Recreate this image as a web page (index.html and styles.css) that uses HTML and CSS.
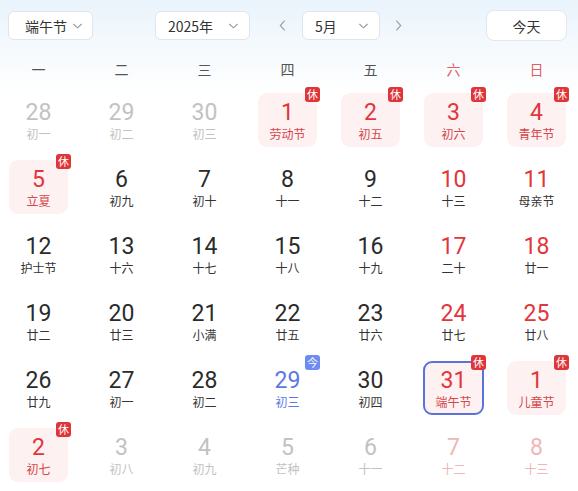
FILE: index.html
```html
<!DOCTYPE html>
<html lang="zh-CN">
<head>
<meta charset="utf-8">
<link rel="stylesheet" href="styles.css">
</head>
<body>
<div class="page">
  <div class="toolbar">
    <div class="select sel-holiday"><span>端午节</span><svg class="chev" viewBox="0 0 12 8"><path d="M1.5 1.8 L6 6 L10.5 1.8"/></svg></div>
    <div class="select sel-year"><span>2025年</span><svg class="chev" viewBox="0 0 12 8"><path d="M1.5 1.8 L6 6 L10.5 1.8"/></svg></div>
    <div class="arrow arrow-prev"><svg viewBox="0 0 8 14"><path d="M6.5 1.5 L1.5 7 L6.5 12.5"/></svg></div>
    <div class="select sel-month"><span>5月</span><svg class="chev" viewBox="0 0 12 8"><path d="M1.5 1.8 L6 6 L10.5 1.8"/></svg></div>
    <div class="arrow arrow-next"><svg viewBox="0 0 8 14"><path d="M1.5 1.5 L6.5 7 L1.5 12.5"/></svg></div>
    <div class="today-btn">今天</div>
  </div>
  <div class="weekdays">
    <div>一</div><div>二</div><div>三</div><div>四</div><div>五</div><div class="we">六</div><div class="we">日</div>
  </div>
  <div class="grid">
    <div class="col"><div class="cell other"><div class="num">28</div><div class="lunar">初一</div></div></div>
    <div class="col"><div class="cell other"><div class="num">29</div><div class="lunar">初二</div></div></div>
    <div class="col"><div class="cell other"><div class="num">30</div><div class="lunar">初三</div></div></div>
    <div class="col"><div class="cell rest"><div class="num">1</div><div class="lunar">劳动节</div><span class="badge">休</span></div></div>
    <div class="col"><div class="cell rest"><div class="num">2</div><div class="lunar">初五</div><span class="badge">休</span></div></div>
    <div class="col"><div class="cell rest"><div class="num">3</div><div class="lunar">初六</div><span class="badge">休</span></div></div>
    <div class="col"><div class="cell rest"><div class="num">4</div><div class="lunar">青年节</div><span class="badge">休</span></div></div>

    <div class="col"><div class="cell rest"><div class="num">5</div><div class="lunar">立夏</div><span class="badge">休</span></div></div>
    <div class="col"><div class="cell"><div class="num">6</div><div class="lunar">初九</div></div></div>
    <div class="col"><div class="cell"><div class="num">7</div><div class="lunar">初十</div></div></div>
    <div class="col"><div class="cell"><div class="num">8</div><div class="lunar">十一</div></div></div>
    <div class="col"><div class="cell"><div class="num">9</div><div class="lunar">十二</div></div></div>
    <div class="col"><div class="cell weekend"><div class="num">10</div><div class="lunar">十三</div></div></div>
    <div class="col"><div class="cell weekend"><div class="num">11</div><div class="lunar">母亲节</div></div></div>

    <div class="col"><div class="cell"><div class="num">12</div><div class="lunar">护士节</div></div></div>
    <div class="col"><div class="cell"><div class="num">13</div><div class="lunar">十六</div></div></div>
    <div class="col"><div class="cell"><div class="num">14</div><div class="lunar">十七</div></div></div>
    <div class="col"><div class="cell"><div class="num">15</div><div class="lunar">十八</div></div></div>
    <div class="col"><div class="cell"><div class="num">16</div><div class="lunar">十九</div></div></div>
    <div class="col"><div class="cell weekend"><div class="num">17</div><div class="lunar">二十</div></div></div>
    <div class="col"><div class="cell weekend"><div class="num">18</div><div class="lunar">廿一</div></div></div>

    <div class="col"><div class="cell"><div class="num">19</div><div class="lunar">廿二</div></div></div>
    <div class="col"><div class="cell"><div class="num">20</div><div class="lunar">廿三</div></div></div>
    <div class="col"><div class="cell"><div class="num">21</div><div class="lunar">小满</div></div></div>
    <div class="col"><div class="cell"><div class="num">22</div><div class="lunar">廿五</div></div></div>
    <div class="col"><div class="cell"><div class="num">23</div><div class="lunar">廿六</div></div></div>
    <div class="col"><div class="cell weekend"><div class="num">24</div><div class="lunar">廿七</div></div></div>
    <div class="col"><div class="cell weekend"><div class="num">25</div><div class="lunar">廿八</div></div></div>

    <div class="col"><div class="cell"><div class="num">26</div><div class="lunar">廿九</div></div></div>
    <div class="col"><div class="cell"><div class="num">27</div><div class="lunar">初一</div></div></div>
    <div class="col"><div class="cell"><div class="num">28</div><div class="lunar">初二</div></div></div>
    <div class="col"><div class="cell today"><div class="num">29</div><div class="lunar">初三</div><span class="badge badge-today">今</span></div></div>
    <div class="col"><div class="cell"><div class="num">30</div><div class="lunar">初四</div></div></div>
    <div class="col"><div class="cell rest selected"><div class="num">31</div><div class="lunar">端午节</div><span class="badge">休</span></div></div>
    <div class="col"><div class="cell rest"><div class="num">1</div><div class="lunar">儿童节</div><span class="badge">休</span></div></div>

    <div class="col"><div class="cell rest"><div class="num">2</div><div class="lunar">初七</div><span class="badge">休</span></div></div>
    <div class="col"><div class="cell other"><div class="num">3</div><div class="lunar">初八</div></div></div>
    <div class="col"><div class="cell other"><div class="num">4</div><div class="lunar">初九</div></div></div>
    <div class="col"><div class="cell other"><div class="num">5</div><div class="lunar">芒种</div></div></div>
    <div class="col"><div class="cell other"><div class="num">6</div><div class="lunar">十一</div></div></div>
    <div class="col"><div class="cell other other-we"><div class="num">7</div><div class="lunar">十二</div></div></div>
    <div class="col"><div class="cell other other-we"><div class="num">8</div><div class="lunar">十三</div></div></div>
  </div>
</div>
</body>
</html>
```
FILE: styles.css
```css
html, body {
  margin: 0;
  padding: 0;
  background: #ffffff;
  overflow: hidden;
}
body {
  font-family: "Noto Sans CJK SC", "Noto Sans", sans-serif;
  color: #333;
}
.page {
  width: 578px;
  height: 491px;
  background: linear-gradient(180deg, #eaf4fc 0px, #f4f9fd 45px, #ffffff 95px);
}
.toolbar {
  height: 51px;
  display: flex;
  align-items: center;
  padding: 0 11px 0 8px;
  box-sizing: border-box;
}
.select {
  height: 29px;
  box-sizing: border-box;
  background: #fff;
  border: 1px solid #e1e5ea;
  border-radius: 6px;
  display: flex;
  align-items: center;
  justify-content: space-between;
  font-size: 14px;
  color: #333;
}
.select span { line-height: 1; }
.chev {
  width: 11px;
  height: 8px;
  fill: none;
  stroke: #999;
  stroke-width: 1.2;
}
.sel-holiday {
  width: 85px;
  padding: 0 9px 0 16px;
}
.sel-year {
  width: 95px;
  margin-left: 62px;
  padding: 0 10px 0 12px;
}
.sel-month {
  width: 78px;
  padding: 0 10px 0 12px;
}
.arrow {
  width: 20px;
  height: 29px;
  display: flex;
  align-items: center;
  justify-content: center;
}
.arrow svg {
  width: 7px;
  height: 13px;
  fill: none;
  stroke: #9aa0a6;
  stroke-width: 1.3;
}
.arrow-prev { margin: 0 10px 0 22px; }
.arrow-next { margin-left: 8px; }
.today-btn {
  margin-left: auto;
  width: 81px;
  height: 31px;
  box-sizing: border-box;
  background: #fff;
  border: 1px solid #e3e7ec;
  border-radius: 8px;
  display: flex;
  align-items: center;
  justify-content: center;
  font-size: 14px;
  color: #333;
}
.weekdays, .grid {
  display: grid;
  grid-template-columns: repeat(7, 83px);
  margin-left: -3px;
  width: 581px;
}
.weekdays {
  height: 36px;
  align-items: center;
  text-align: center;
  font-size: 14px;
  color: #555;
}
.weekdays .we { color: #e35d62; }
.grid {
  grid-auto-rows: 67px;
}
.col {
  display: flex;
  justify-content: center;
  padding-top: 6px;
}
.cell {
  position: relative;
  width: 59px;
  height: 54px;
  box-sizing: border-box;
  border-radius: 9px;
  display: flex;
  flex-direction: column;
  align-items: center;
  padding-top: 6px;
}
.num {
  font-size: 23px;
  line-height: 28px;
  font-weight: 400;
  color: #2b2b2b;
  font-family: Roboto, "Noto Sans", sans-serif;
}
.lunar {
  font-size: 12px;
  line-height: 14px;
  color: #333;
}
.rest { background: #fdf1f1; }
.rest .num, .weekend .num { color: #e2353c; }
.rest .lunar { color: #d6454b; }
.other .num, .other .lunar { color: #c2c2c2; }
.other-we .num, .other-we .lunar { color: #f2b5b8; }
.today .num, .today .lunar { color: #5b78e6; }
.selected {
  border: 2px solid #5b72d8;
  padding-top: 4px;
  width: 61px;
}
.badge {
  position: absolute;
  top: -6px;
  right: -3px;
  width: 15px;
  height: 15px;
  border-radius: 3px;
  background: #e03538;
  color: #fff;
  font-size: 11px;
  line-height: 15px;
  text-align: center;
}
.selected .badge { top: -8px; right: -4px; }
.badge-today {
  background: #6d8cf1;
}
```
